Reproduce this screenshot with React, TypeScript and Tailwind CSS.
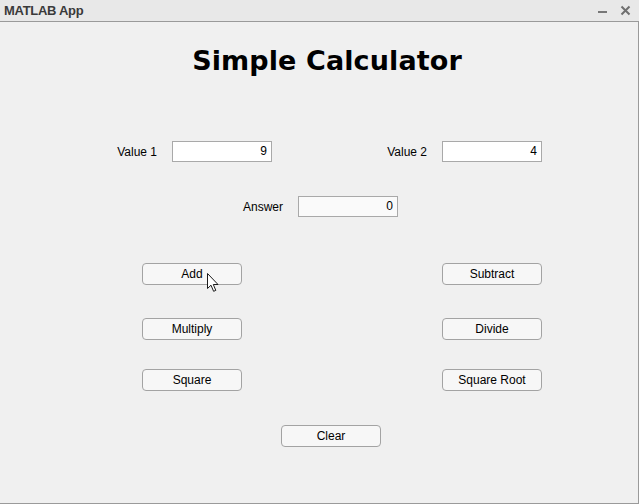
import React, { useState } from 'react';

const font = { fontFamily: '"Liberation Sans", Arial, sans-serif' };

function CalcButton({ label, onClick }: { label: string; onClick?: () => void }) {
  return (
    <button
      onClick={onClick}
      className="w-[100px] h-[22px] rounded-[4px] border border-[#a3a3a3] bg-[#f7f7f7] text-[12px] text-black leading-none"
    >
      {label}
    </button>
  );
}

function Field({ value, readOnly }: { value: string; readOnly?: boolean }) {
  return (
    <div
      className={
        'w-[100px] h-[21px] border border-[#a9a9a9] text-right pr-[4px] text-[12px] leading-[19px] text-black ' +
        (readOnly ? 'bg-[#fafafa]' : 'bg-white')
      }
    >
      {value}
    </div>
  );
}

export default function App() {
  const [v1] = useState('9');
  const [v2] = useState('4');
  const [answer, setAnswer] = useState('0');

  return (
    <div className="w-[639px] h-[504px] bg-[#f0f0f0] flex flex-col overflow-hidden" style={font}>
      {/* title bar */}
      <div className="h-[22px] bg-[#e8e8e8] border-b border-[#9a9a9a] flex items-center justify-between pl-[4px] pr-[8px] shrink-0">
        <span className="text-[13px] font-bold text-[#3a3a3a] tracking-[-0.3px]">MATLAB App</span>
        <div className="flex items-center gap-[13px] text-[#6f6f6f]">
          <span className="block w-[9px] h-[2px] bg-[#777] mt-[2px]"></span>
          <svg width="11" height="11" viewBox="0 0 11 11">
            <path d="M1.5 1.5 L9.5 9.5 M9.5 1.5 L1.5 9.5" stroke="#6f6f6f" strokeWidth="2" />
          </svg>
        </div>
      </div>

      {/* body */}
      <div className="relative flex-1 flex flex-col border-r border-b border-[#9a9a9a]">
        <h1 className="mt-[21px] pl-[16px] text-center text-[27px] font-bold text-black leading-[36px]" style={{ fontFamily: '"DejaVu Sans", "Liberation Sans", sans-serif', letterSpacing: '0.1px' }}>
          Simple Calculator
        </h1>

        <div className="mt-[62px] flex items-center text-[12px] text-black">
          <span className="w-[157px] text-right">Value 1</span>
          <span className="ml-[15px]"><Field value={v1} /></span>
          <span className="w-[155px] text-right">Value 2</span>
          <span className="ml-[15px]"><Field value={v2} /></span>
        </div>

        <div className="mt-[34px] flex items-center text-[12px] text-black">
          <span className="w-[283px] text-right">Answer</span>
          <span className="ml-[15px]"><Field value={answer} readOnly /></span>
        </div>

        <div className="mt-[46px] flex flex-col gap-[33px] pl-[142px]">
          <div className="flex gap-[200px]">
            <CalcButton label="Add" onClick={() => setAnswer(String(Number(v1) + Number(v2)))} />
            <CalcButton label="Subtract" onClick={() => setAnswer(String(Number(v1) - Number(v2)))} />
          </div>
          <div className="flex gap-[200px]">
            <CalcButton label="Multiply" onClick={() => setAnswer(String(Number(v1) * Number(v2)))} />
            <CalcButton label="Divide" onClick={() => setAnswer(String(Number(v1) / Number(v2)))} />
          </div>
        </div>
        <div className="mt-[29px] flex gap-[200px] pl-[142px]">
          <CalcButton label="Square" onClick={() => setAnswer(String(Number(v1) ** 2))} />
          <CalcButton label="Square Root" onClick={() => setAnswer(String(Math.sqrt(Number(v1))))} />
        </div>
        <div className="mt-[32px] pl-[281px]">
          <CalcButton label="Clear" onClick={() => setAnswer('0')} />
        </div>

        {/* mouse pointer over Add */}
        <svg className="absolute left-[207px] top-[251px]" width="13" height="20" viewBox="0 0 13 20">
          <path d="M0.5 0.5 L0.5 15.5 L4 12.2 L6.6 18.3 L8.8 17.4 L6.3 11.5 L11 11.5 Z" fill="white" stroke="#1a1a1a" strokeWidth="1" strokeLinejoin="round" />
        </svg>
      </div>
    </div>
  );
}
